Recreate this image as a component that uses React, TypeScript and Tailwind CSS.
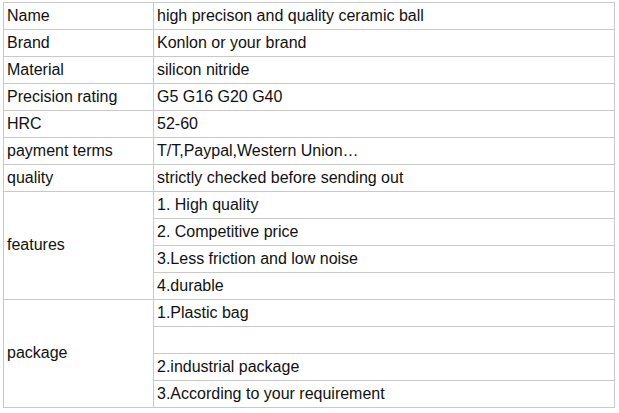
const rows: [string, string][] = [
  ["Name", "high precison and quality ceramic ball"],
  ["Brand", "Konlon or your brand"],
  ["Material", "silicon nitride"],
  ["Precision rating", "G5 G16 G20 G40"],
  ["HRC", "52-60"],
  ["payment terms", "T/T,Paypal,Western Union…"],
  ["quality", "strictly checked before sending out"],
];

const groups: [string, string[]][] = [
  ["features", ["1. High quality", "2. Competitive price", "3.Less friction and low noise", "4.durable"]],
  ["package", ["1.Plastic bag", "", "2.industrial package", "3.According to your requirement"]],
];

const cell = "border border-[#c9c9c9] h-[27px] px-[3px] pt-0 pb-[1px] align-middle";

export default function App() {
  return (
    <main className="w-[619px] h-[413px] bg-white pt-[2px] pl-[3px]" style={{ fontFamily: '"Liberation Sans", Arial, sans-serif' }}>
      <table className="border-collapse w-[612px] text-[16px] text-[#111] leading-none table-fixed">
        <colgroup>
          <col className="w-[150px]" />
          <col />
        </colgroup>
        <tbody>
          {rows.map(([k, v]) => (
            <tr key={k}>
              <td className={cell}>{k}</td>
              <td className={cell}>{v}</td>
            </tr>
          ))}
          {groups.map(([k, items]) =>
            items.map((v, i) => (
              <tr key={k + i}>
                {i === 0 && (
                  <td rowSpan={items.length} className={cell}>
                    {k}
                  </td>
                )}
                <td className={cell}>{v}</td>
              </tr>
            ))
          )}
        </tbody>
      </table>
    </main>
  );
}
